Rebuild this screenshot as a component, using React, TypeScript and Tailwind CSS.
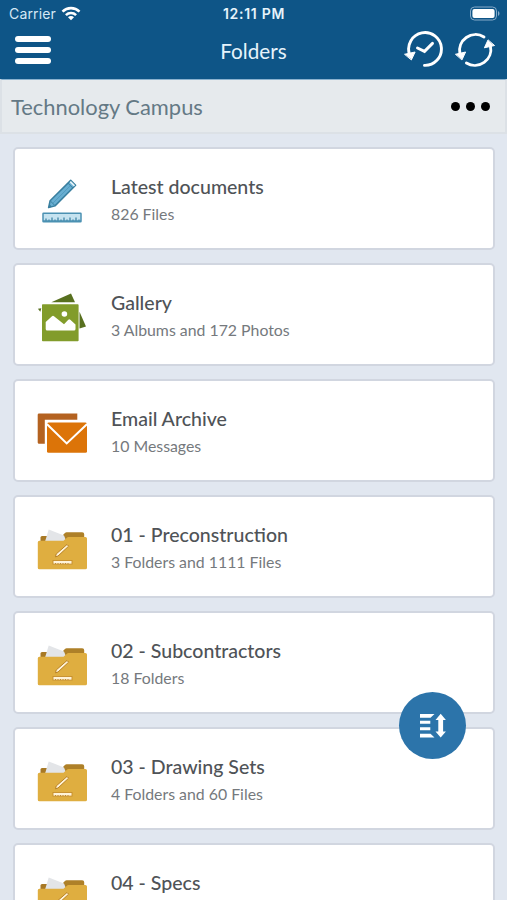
import type { ReactNode } from "react";

type Folder = {
  title: string;
  detail?: string;
  icon: ReactNode;
};

function WifiIcon() {
  return (
    <svg width="20" height="16" viewBox="0 0 20 16" fill="none" stroke="#fff" strokeWidth="2.6">
      <path d="M1.5 5.6a12.2 12.2 0 0 1 17 0" />
      <path d="M4.9 9.1a7.4 7.4 0 0 1 10.2 0" />
      <path d="M10 14.3 7 11.3a4.2 4.2 0 0 1 6 0Z" fill="#fff" stroke="none" />
    </svg>
  );
}

function BatteryIcon() {
  return (
    <svg width="32" height="16" viewBox="0 0 32 16">
      <rect x="1.5" y="1" width="26" height="13" rx="4" fill="none" stroke="#86abc9" />
      <rect x="3.4" y="2.9" width="22.2" height="9.2" rx="2" fill="#fff" />
      <path d="M29 5c2 1 2 4 0 5Z" fill="#86abc9" />
    </svg>
  );
}

function HistoryIcon() {
  return (
    <svg width="40" height="40" viewBox="0 0 40 40" fill="none" stroke="#fff" strokeWidth="2.9" strokeLinecap="round">
      <path d="M5.4 24A16.4 16.4 0 1 1 20.5 35.4" />
      <path d="m13.5 18 7 3.4 8-8" strokeLinejoin="miter" />
      <path d="m.9 24.2 10.2-2.2-3.6 7.6Z" fill="#fff" strokeWidth="1" strokeLinejoin="round" />
    </svg>
  );
}

function RefreshIcon() {
  return (
    <svg width="40" height="40" viewBox="0 0 40 40" fill="none" stroke="#fff" strokeWidth="2.9" strokeLinecap="round">
      <path d="M4.9 24A16 16 0 0 1 29 7" />
      <path d="M35.4 15.8A16 16 0 0 1 11.4 33" />
      <path d="m.8 24.2 9.8-2.2-3.5 7.6Z" fill="#fff" strokeWidth="1" strokeLinejoin="round" />
      <path d="m39.2 15.6-9.8 2.2 3.5-7.6Z" fill="#fff" strokeWidth="1" strokeLinejoin="round" />
    </svg>
  );
}

function DocumentsIcon() {
  return (
    <svg className="shrink-0" width="75" height="65" viewBox="0 0 75 65">
      <path d="m23.6 41.6 1.5-6.9 20.6-20.3 4.9 4.9L30 39.9Z" fill="#68aed1" stroke="#397f9f" strokeWidth="1.5" strokeLinejoin="round" />
      <path d="m44.6 16.2 1.3-1.2 4.2 4.2-1.3 1.4Z" fill="#e3f2f8" />
      <path d="m25.4 35 4.4 4.4M42.9 17.1l4.9 4.9" stroke="#397f9f" strokeWidth="1" />
      <path d="M27.9 37.2 45.2 19.9" stroke="#4e97ba" strokeWidth=".8" />
      <path d="m23.5 41.7.8-3.6 2.6 2.6Z" fill="#397f9f" />
      <rect x="18" y="47.2" width="38" height="8.6" rx=".5" fill="#c5e3f0" stroke="#4b91b2" strokeWidth="1.5" />
      <path
        d="M21 55.5v-3M24 55.5v-2M27 55.5v-4M30 55.5v-2M33 55.5v-4M36 55.5v-2M39 55.5v-4M42 55.5v-2M45 55.5v-4M48 55.5v-2M51 55.5v-4M54 55.5v-2"
        stroke="#3f86a7"
        strokeWidth="1.3"
      />
      <path d="M18 55.2h38" stroke="#4b91b2" strokeWidth="1.8" />
    </svg>
  );
}

function GalleryIcon() {
  return (
    <svg className="shrink-0" width="75" height="65" viewBox="0 0 75 65">
      <path d="M26.3 20.3 46 11.5l4 8.8Z" fill="#58701f" />
      <path d="M54.5 29.7 61 44.5l-6.5 2Z" fill="#58701f" />
      <path d="m12.9 26.8 3.4-.6-1 3.6Z" fill="#58701f" />
      <rect x="17" y="22.3" width="36.6" height="37" rx=".8" fill="#829c2b" />
      <circle cx="39.4" cy="32" r="2.8" fill="#fff" />
      <path d="M20.7 40.1 27 34.2a1.5 1.5 0 0 1 2 0l10 8 4.3-4.4a1.4 1.4 0 0 1 2 0l5.2 4.8V47a1.5 1.5 0 0 1-1.5 1.5H22.2a1.5 1.5 0 0 1-1.5-1.5Z" fill="#fff" />
    </svg>
  );
}

function EmailIcon() {
  return (
    <svg className="shrink-0" width="75" height="65" viewBox="0 0 75 65">
      <path d="M14 15.5h38.3v6.2H19.8v24H14a1.3 1.3 0 0 1-1.3-1.3V16.8a1.3 1.3 0 0 1 1.3-1.3Z" fill="#b46220" />
      <rect x="22" y="24.5" width="40" height="30.3" rx="1.5" fill="#dc7408" />
      <path d="m21.8 26 19.9 19.4L62.2 26" fill="none" stroke="#fff" strokeWidth="2.1" />
    </svg>
  );
}

function FolderIcon() {
  return (
    <svg className="shrink-0" width="75" height="65" viewBox="0 0 75 65">
      <path d="M15.5 28v-4.5a1.5 1.5 0 0 1 1.5-1.5h5v6Z" fill="#a87925" />
      <path d="m37 22 3.2-3.2a2 2 0 0 1 1.4-.5h15.6a2 2 0 0 1 2 2V28H38Z" fill="#ae8028" />
      <path d="M19.6 29 23.7 15.4 39 21.5 42 29Z" fill="#e3e5e8" />
      <path d="M14.3 26.7h24.2l4-3.4a1.8 1.8 0 0 1 1.1-.4h16.8a1.6 1.6 0 0 1 1.6 1.6v29.2a1.6 1.6 0 0 1-1.6 1.6h-46a1.6 1.6 0 0 1-1.6-1.6V28.3a1.6 1.6 0 0 1 1.5-1.6Z" fill="#dfae40" />
      <path d="m30.5 42.8.7-2.8 10.8-9.5 1.6 1.7L33 42Z" fill="#fff3d8" stroke="#b2791b" strokeWidth=".9" />
      <rect x="28" y="46.5" width="19" height="3.6" fill="#fff3d8" stroke="#c58d2b" strokeWidth=".9" />
      <path d="M30.5 50v-1M33 50v-1M35.5 50v-1M38 50v-1M40.5 50v-1M43 50v-1" stroke="#b2791b" strokeWidth=".8" />
    </svg>
  );
}

function SortIcon() {
  return (
    <svg width="26" height="26" viewBox="0 0 26 26" fill="#fff">
      <path d="M0 1h14.5l-4 3.7H0ZM0 7.8h10.3v3H0ZM0 14.2h10.3v3H0ZM0 20.7h10.5l4 3.7H0Z" />
      <path d="m20.7.8 5.2 6.2h-2.8v11.6h2.8l-5.2 6-5.2-6h2.8V7h-2.8Z" />
    </svg>
  );
}

const FOLDERS: Folder[] = [
  { title: "Latest documents", detail: "826 Files", icon: <DocumentsIcon /> },
  { title: "Gallery", detail: "3 Albums and 172 Photos", icon: <GalleryIcon /> },
  { title: "Email Archive", detail: "10 Messages", icon: <EmailIcon /> },
  { title: "01 - Preconstruction", detail: "3 Folders and 1111 Files", icon: <FolderIcon /> },
  { title: "02 - Subcontractors", detail: "18 Folders", icon: <FolderIcon /> },
  { title: "03 - Drawing Sets", detail: "4 Folders and 60 Files", icon: <FolderIcon /> },
  { title: "04 - Specs", icon: <FolderIcon /> },
];

function Header() {
  return (
    <header className="h-[79px] shrink-0 bg-[#0e5587] text-white">
      <div className="grid h-[27px] grid-cols-3 items-center pl-[9px] pr-1.5 font-['Inter',sans-serif]">
        <div className="flex items-center gap-[5px] text-[14px] text-[#d5e8f5]">
          <span className="tracking-[0.15px]">Carrier</span>
          <WifiIcon />
        </div>
        <span className="-ml-0.5 text-center text-[14px] font-semibold tracking-[0.7px] text-[#e6f3fb]">12:11 PM</span>
        <div className="flex justify-end">
          <BatteryIcon />
        </div>
      </div>
      <div className="grid h-[46px] grid-cols-3 items-center pl-[15px] pr-3">
        <button type="button" aria-label="Menu" className="flex w-9 flex-col gap-[5px]">
          <span className="h-1.5 rounded-full bg-white" />
          <span className="h-1.5 rounded-full bg-white" />
          <span className="h-1.5 rounded-full bg-white" />
        </button>
        <h1 className="-ml-[3px] pt-1 text-center text-[20.7px] text-[#e6f3fb]">Folders</h1>
        <div className="flex justify-end gap-[11px]">
          <HistoryIcon />
          <RefreshIcon />
        </div>
      </div>
    </header>
  );
}

function FolderCard({ title, detail, icon }: Folder) {
  return (
    <li className="flex h-[103px] shrink-0 items-center rounded-[5px] border-2 border-[#d1d6e0] bg-white pl-[10px]">
      {icon}
      <div className="pl-[11px] pt-1">
        <h2 className="text-[19.55px] font-medium leading-7 text-[#4f5357]">{title}</h2>
        <p className="h-7 text-[15.85px] leading-[25px] text-[#75797d]">{detail}</p>
      </div>
    </li>
  );
}

export default function App() {
  return (
    <div className="relative flex h-[900px] w-full flex-col overflow-hidden bg-[#e1e7f0] font-['Lato',sans-serif]">
      <Header />
      <div className="flex h-[55px] shrink-0 items-center justify-between border-2 border-t border-[#dce1e6] border-t-[#8ab2cf] bg-[#e6eaed] pl-[9px] pr-[15px]">
        <span className="pt-0.5 text-[21.9px] text-[#647985]">Technology Campus</span>
        <button type="button" aria-label="More" className="flex gap-[6px]">
          <span className="size-[9px] rounded-full bg-black" />
          <span className="size-[9px] rounded-full bg-black" />
          <span className="size-[9px] rounded-full bg-black" />
        </button>
      </div>
      <ul className="flex flex-col gap-[13px] pl-[13px] pr-3 pt-[13px]">
        {FOLDERS.map((folder) => (
          <FolderCard key={folder.title} {...folder} />
        ))}
      </ul>
      <button
        type="button"
        aria-label="Sort"
        className="absolute right-[41px] top-[692px] flex size-[67px] items-center justify-center rounded-full bg-[#2c74aa]"
      >
        <SortIcon />
      </button>
    </div>
  );
}
